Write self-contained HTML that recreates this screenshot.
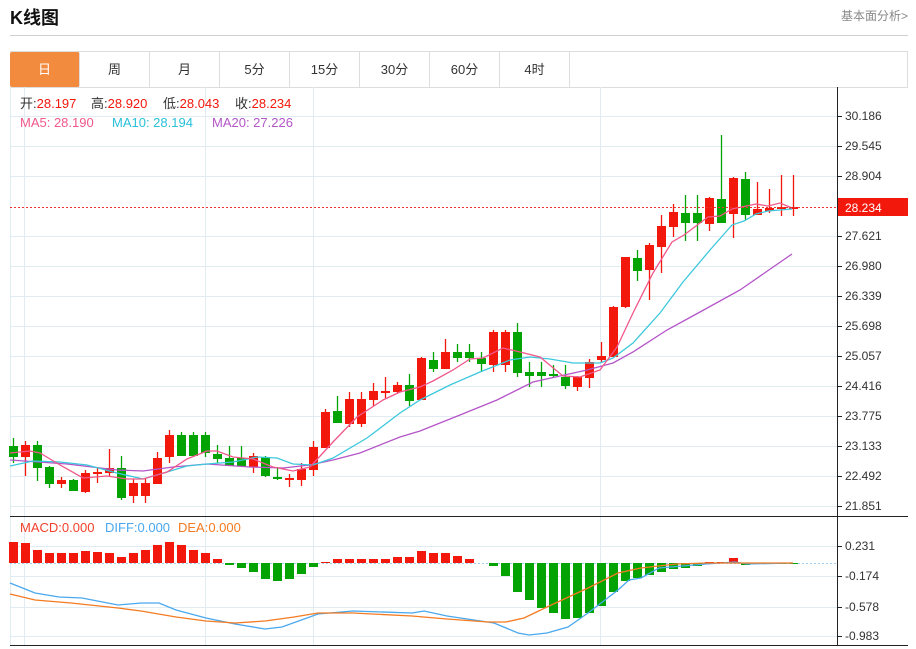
<!DOCTYPE html>
<html><head><meta charset="utf-8">
<style>
body{margin:0;background:#fff;font-family:"Liberation Sans","Noto Sans CJK SC",sans-serif;width:916px;height:649px;overflow:hidden;position:relative}
.t{position:absolute;left:10px;top:4px;font-size:18px;font-weight:bold;color:#111}
.more{position:absolute;right:8px;top:7px;font-size:12px;color:#888}
.hr{position:absolute;left:10px;top:35px;width:898px;height:1px;background:#d0d0d0}
.tabs{position:absolute;left:10px;top:51px;width:897px;height:35px;border:1px solid #ddd;border-left:none}
.tab{position:absolute;top:0;width:69px;height:35px;border-right:1px solid #ddd;text-align:center;line-height:36px;font-size:13px;color:#333}
.tab.on{background:#f28b3d;color:#fff;border-radius:2px}
svg{position:absolute;left:0;top:0}
</style></head><body>
<div class="t">K线图</div>
<div class="more">基本面分析&gt;</div>
<div class="hr"></div>
<div class="tabs">
<div class="tab on" style="left:0">日</div>
<div class="tab" style="left:70px">周</div>
<div class="tab" style="left:140px">月</div>
<div class="tab" style="left:210px">5分</div>
<div class="tab" style="left:280px">15分</div>
<div class="tab" style="left:350px">30分</div>
<div class="tab" style="left:420px">60分</div>
<div class="tab" style="left:490px">4时</div>
</div>
<svg id="s" width="916" height="649" xmlns="http://www.w3.org/2000/svg" font-family="Liberation Sans, Noto Sans CJK SC, sans-serif">
<g id="grid" stroke="#e1ebf2" stroke-width="1"></g>
<line x1="10.5" y1="87" x2="10.5" y2="645" stroke="#e1ebf2"/>
<g id="candles"></g>
<polyline id="ma20" fill="none" stroke="#b455c8" stroke-width="1.3"/>
<polyline id="ma10" fill="none" stroke="#3cc8dc" stroke-width="1.3"/>
<polyline id="ma5" fill="none" stroke="#f0588a" stroke-width="1.3"/>
<line x1="10" y1="207.5" x2="837" y2="207.5" stroke="#e33" stroke-dasharray="2,2"/>
<line x1="10" y1="563.5" x2="837" y2="563.5" stroke="#9fd0ee" stroke-dasharray="2,2"/>
<g id="macd"></g>
<polyline id="diff" fill="none" stroke="#4aa8ee" stroke-width="1.3"/>
<polyline id="dea" fill="none" stroke="#f37b22" stroke-width="1.3"/>
<line x1="837.5" y1="87" x2="837.5" y2="645" stroke="#222"/>
<line x1="10" y1="516.5" x2="908" y2="516.5" stroke="#222"/>
<line x1="10" y1="645.5" x2="908" y2="645.5" stroke="#222"/>
<g id="ticks" stroke="#222"></g>
<g font-size="12" fill="#333">
<text x="845" y="120">30.186</text><text x="845" y="150">29.545</text><text x="845" y="180">28.904</text>
<text x="845" y="240">27.621</text><text x="845" y="270">26.980</text><text x="845" y="300">26.339</text>
<text x="845" y="330">25.698</text><text x="845" y="360">25.057</text><text x="845" y="390">24.416</text>
<text x="845" y="420">23.775</text><text x="845" y="450">23.133</text><text x="845" y="480">22.492</text>
<text x="845" y="510">21.851</text>
<text x="845" y="550">0.231</text><text x="845" y="580">-0.174</text><text x="845" y="611">-0.578</text><text x="845" y="640">-0.983</text>
</g>
<rect x="838" y="198" width="70" height="18" fill="#f2180c"/>
<text x="845" y="212" font-size="12" fill="#fff">28.234</text>
<g font-size="13">
<text x="20" y="108" fill="#333">开:<tspan fill="#f2180c">28.197</tspan></text>
<text x="91" y="108" fill="#333">高:<tspan fill="#f2180c">28.920</tspan></text>
<text x="163" y="108" fill="#333">低:<tspan fill="#f2180c">28.043</tspan></text>
<text x="235" y="108" fill="#333">收:<tspan fill="#f2180c">28.234</tspan></text>
<text x="20" y="127" fill="#f0588a">MA5: 28.190</text>
<text x="112" y="127" fill="#29c0d8">MA10: 28.194</text>
<text x="212" y="127" fill="#b455c8">MA20: 27.226</text>
<text x="20" y="532" fill="#f2402c">MACD:0.000</text>
<text x="105" y="532" fill="#4aa8ee">DIFF:0.000</text>
<text x="178" y="532" fill="#f37b22">DEA:0.000</text>
</g>
</svg>
<script>
var NS="http://www.w3.org/2000/svg";
function el(p,t,a){var e=document.createElementNS(NS,t);for(var k in a)e.setAttribute(k,a[k]);p.appendChild(e);return e;}
var g=document.getElementById('grid');
[116,146,176,236,266,296,326,356,386,416,446,476,506,546,576,607,636].forEach(function(y){el(g,'line',{x1:10,x2:837,y1:y+.5,y2:y+.5});});
[24,205,313,600].forEach(function(x){el(g,'line',{x1:x+.5,x2:x+.5,y1:87,y2:645});});
var tk=document.getElementById('ticks');
[116,146,176,236,266,296,326,356,386,416,446,476,506,546,576,607,636].forEach(function(y){el(tk,'line',{x1:837,x2:842,y1:y+.5,y2:y+.5});});
var R="#f2180c",G="#03a303";
var C=[[446,457,438,463,G],[445,457,441,476,R],[445,468,441,481,G],[467,484,466,488,G],[480,484,477,488,R],[480,491,479,491,G],[473,492,470,493,R],[472,474,467,483,R],[468,473,449,476,R],[468,498,456,500,G],[483,496,479,503,R],[483,496,479,503,R],[458,484,452,484,R],[435,457,430,463,R],[435,456,432,456,G],[435,456,432,456,G],[435,453,432,457,G],[454,459,445,463,G],[458,466,446,466,G],[458,466,446,466,G],[456,467,453,473,R],[457,476,456,477,G],[477,479,467,480,G],[478,480,474,487,R],[469,480,463,486,R],[447,470,441,476,R],[412,448,409,448,R],[411,423,396,423,G],[399,424,392,427,R],[399,424,392,427,R],[391,400,383,406,R],[391,393,377,398,R],[385,392,382,393,R],[385,401,374,406,G],[358,400,357,400,R],[360,369,352,372,G],[352,369,339,369,R],[352,358,344,362,G],[352,358,344,362,G],[358,364,352,372,G],[332,365,330,372,R],[332,365,330,372,R],[332,373,323,377,G],[372,376,362,387,G],[372,376,362,387,G],[374,376,365,377,G],[377,386,365,389,G],[377,387,376,391,R],[362,378,359,388,R],[356,360,342,363,R],[307,357,306,357,R],[257,307,257,308,R],[258,271,250,281,G],[245,270,243,300,R],[226,247,215,273,R],[212,227,204,237,R],[213,223,195,241,G],[213,223,195,241,G],[198,224,197,231,R],[199,223,135,223,G],[178,214,177,238,R],[179,215,172,220,G],[209,215,182,215,R],[208,211,189,213,R],[207,209,175,216,R],[207,209,175,216,R]];
var cg=document.getElementById('candles');
C.forEach(function(c,i){var x=13+i*12;el(cg,'line',{x1:x+.5,x2:x+.5,y1:c[2],y2:c[3],stroke:c[4],'stroke-width':1.3});el(cg,'rect',{x:x-4,y:c[0],width:9,height:Math.max(2,c[1]-c[0]),fill:c[4]});});
function pl(id,pts){document.getElementById(id).setAttribute('points',pts.map(function(p){return p.join(',')}).join(' '));}
pl('ma5',[[10,453],[30,451],[40,453],[60,465],[83,478],[107,476],[127,479],[143,479],[167,472],[187,459],[207,451],[217,451],[233,457],[253,459],[273,467],[293,471],[310,467],[333,442],[357,417],[383,400],[400,392],[420,387],[433,381],[453,370],[470,359],[483,358],[503,348],[520,352],[540,357],[563,376],[580,377],[600,370],[617,347],[633,313],[653,273],[672,242],[684,235],[708,217],[720,216],[732,209],[756,204],[768,206],[780,203],[792,208]]);
pl('ma10',[[10,466],[33,461],[60,462],[87,465],[117,473],[143,479],[167,472],[187,466],[207,464],[233,462],[257,457],[277,458],[293,464],[313,465],[333,458],[367,438],[400,413],[420,400],[450,385],[480,372],[510,360],[530,357],[550,359],[573,363],[600,363],[613,358],[633,343],[660,313],[683,282],[710,250],[732,225],[744,221],[756,214],[768,211],[792,209]]);
pl('ma20',[[10,460],[67,464],[117,470],[143,471],[173,467],[207,464],[250,467],[283,468],[310,465],[333,460],[360,453],[400,437],[420,431],[460,415],[497,400],[533,382],[587,370],[613,363],[633,352],[667,330],[700,312],[740,290],[792,254]]);
var M=[542,543,550,553,553,553,551,552,553,557,553,550,545,542,545,550,553,559,565,568,572,579,581,579,574,567,562,559,559,559,559,559,557,557,551,553,553,556,559,563,566,576,592,600,608,613,619,618,613,606,592,581,578,575,572,569,568,566,562,562,558,565,564,564,564,564];
var mg=document.getElementById('macd');
M.forEach(function(v,i){var x=13+i*12;var col=v<563?R:G;var y=Math.min(v,563),h=Math.abs(v-563);if(h<1)return;el(mg,'rect',{x:x-4,y:y,width:9,height:h,fill:col});});
pl('diff',[[10,583],[35,593],[59,597],[82,598],[118,605],[141,603],[159,603],[176,610],[206,618],[235,624],[265,629],[282,627],[318,614],[353,611],[412,613],[424,611],[447,616],[494,623],[518,633],[529,635],[547,633],[568,627],[588,613],[618,590],[629,580],[641,578],[659,568],[706,564],[735,562],[747,564],[793,563]]);
pl('dea',[[10,594],[35,600],[71,603],[118,608],[141,611],[176,617],[206,621],[235,623],[265,621],[294,617],[318,613],[353,613],[412,616],[447,619],[488,622],[506,622],[524,618],[547,607],[588,588],[618,573],[641,568],[676,564],[706,563],[793,563]]);
</script>
</body></html>
